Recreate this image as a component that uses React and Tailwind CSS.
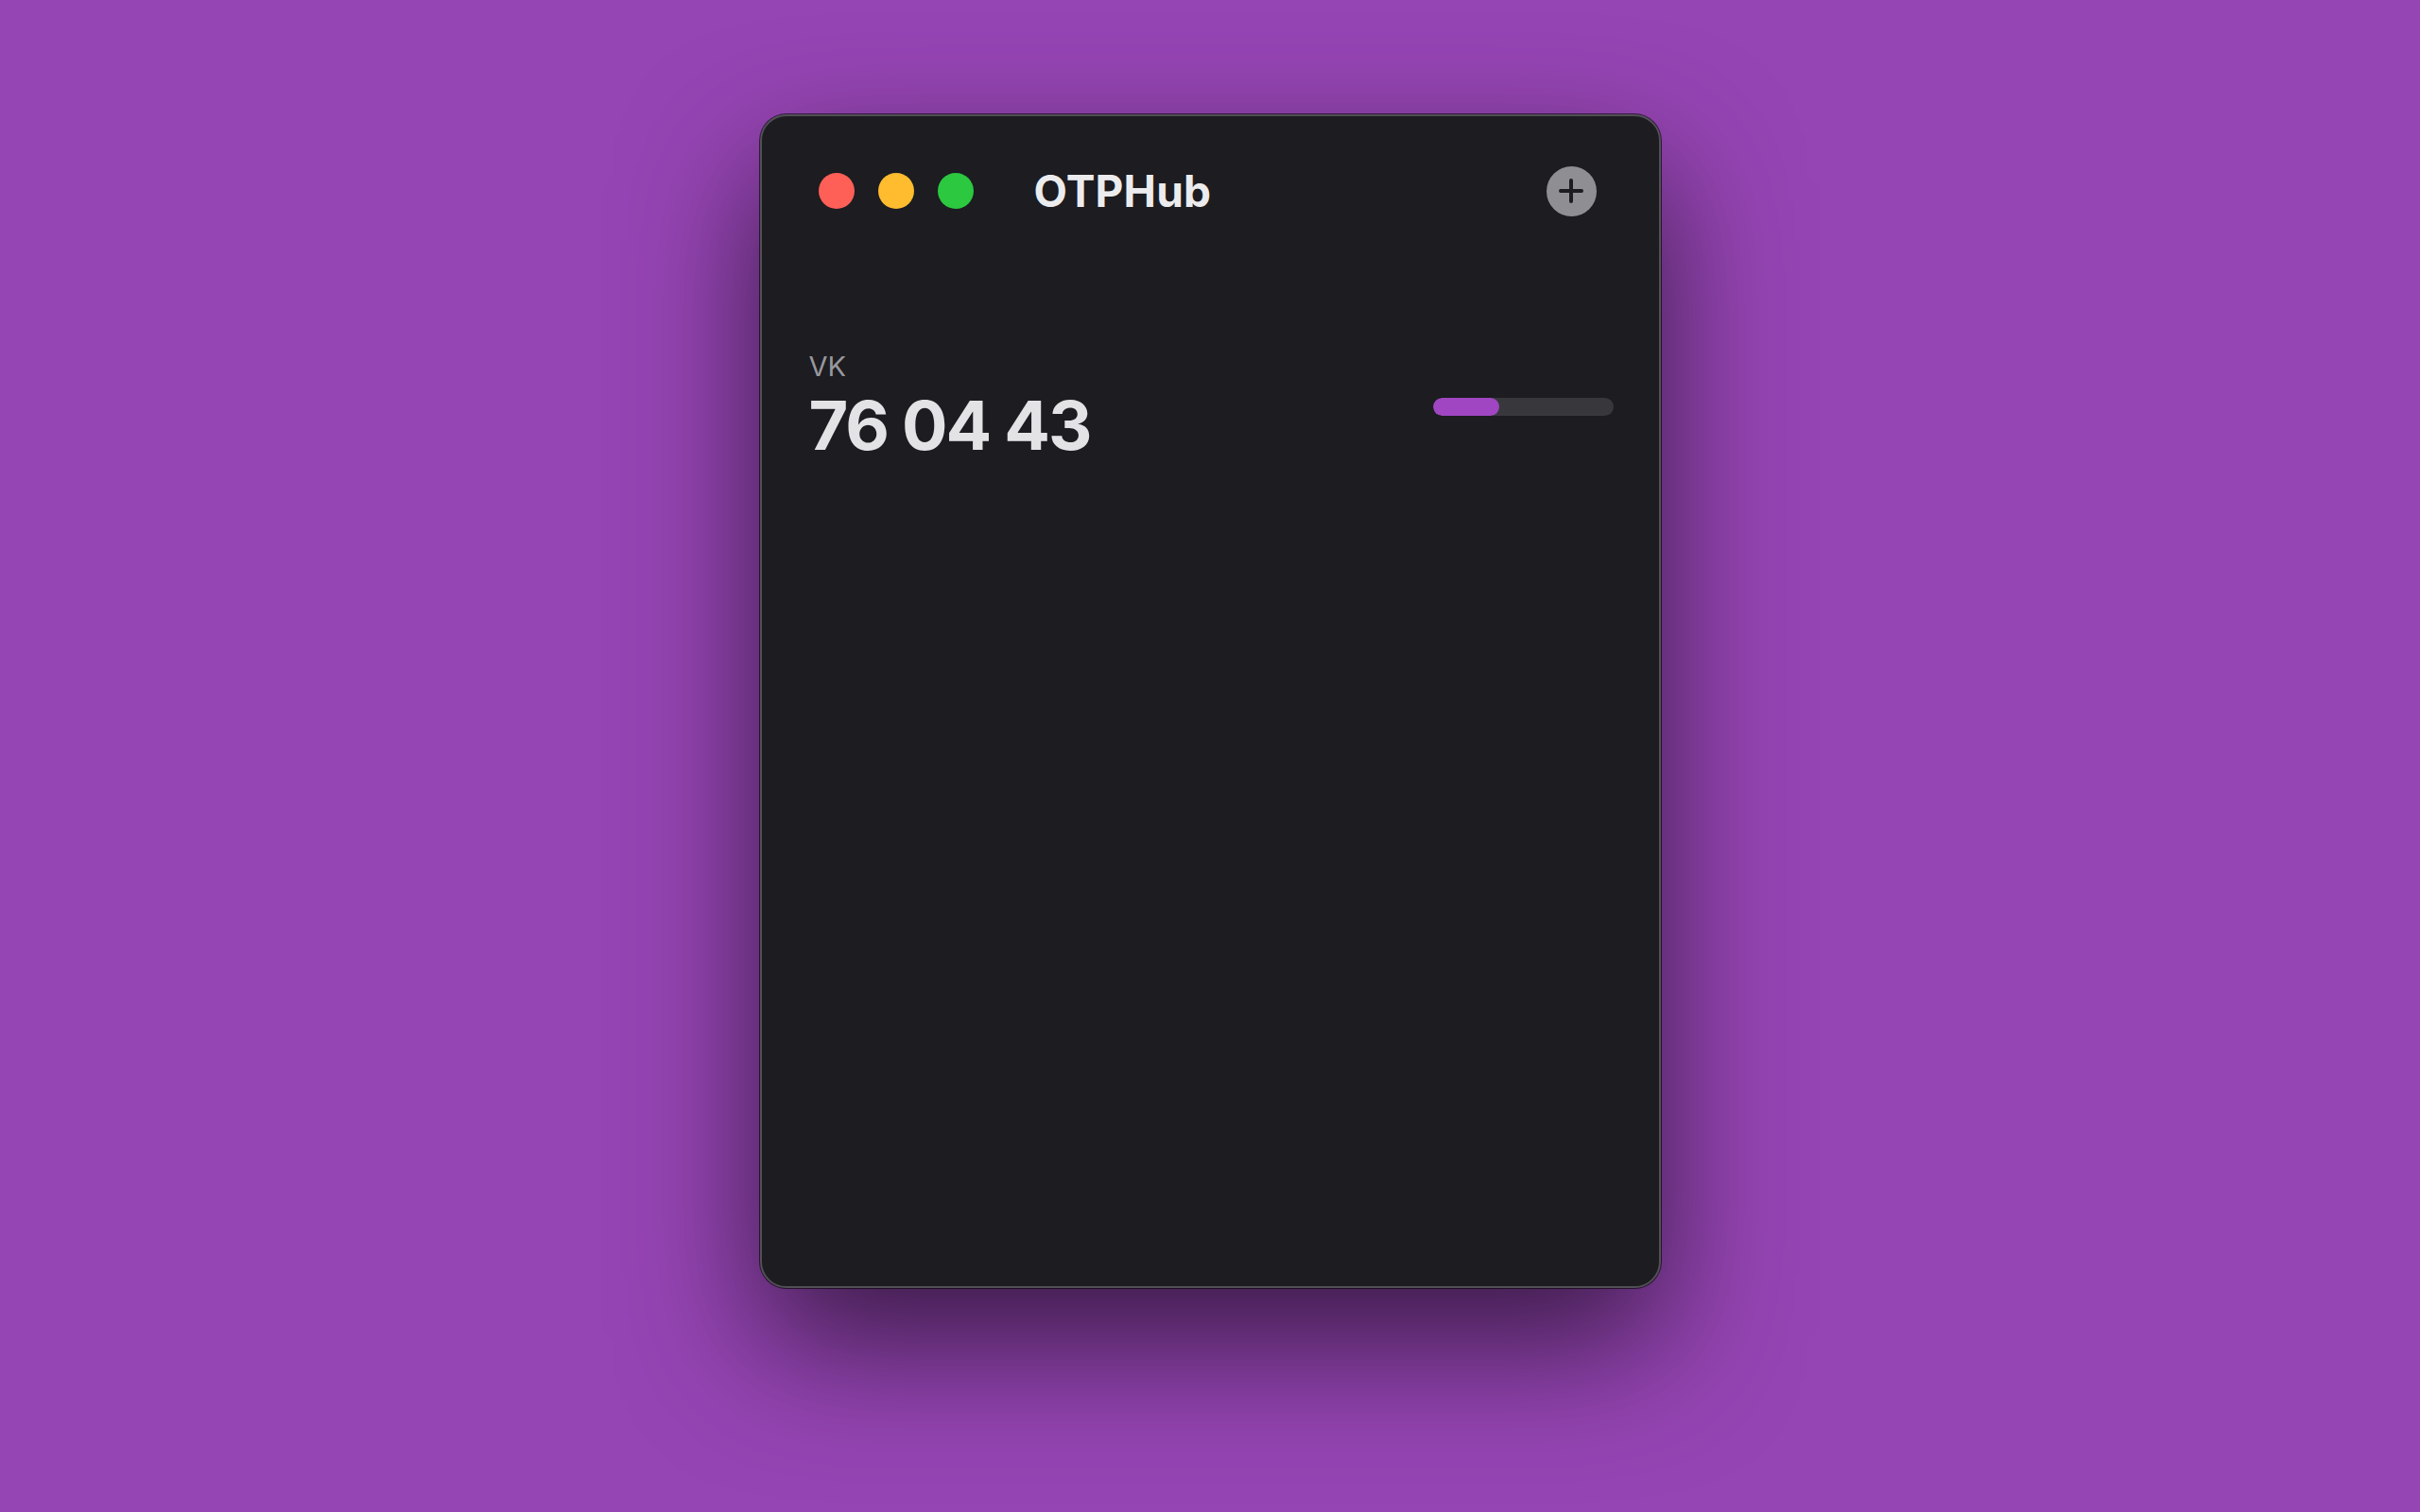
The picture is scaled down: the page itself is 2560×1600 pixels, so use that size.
export default function App() {
  return (
    <div
      className="w-full h-[1600px] bg-[#9645b4] flex justify-center pt-[121px] overflow-hidden"
      style={{ fontFamily: 'Inter, "Noto Sans", sans-serif' }}
    >
      <div className="w-[953px] h-[1242px] rounded-[28px] bg-[#1c1c21] border-2 border-[#505055] shadow-[0_0_0_1px_rgba(0,0,0,0.6),0_60px_140px_rgba(0,0,0,0.62)] flex flex-col">
        <div className="h-[158px] flex items-center pl-[60px] pr-[66px]">
          <div className="flex items-center gap-[25px]">
            <span className="w-[38px] h-[38px] rounded-full bg-[#fe5f57]" />
            <span className="w-[38px] h-[38px] rounded-full bg-[#febc2e]" />
            <span className="w-[38px] h-[38px] rounded-full bg-[#2bc840]" />
          </div>
          <div className="ml-[64px] text-[46px] font-bold leading-none text-[#ececee] tracking-[0.2px]">
            OTPHub
          </div>
          <div className="ml-auto w-[53px] h-[53px] rounded-full bg-[#8e8e93] flex items-center justify-center">
            <svg width="26" height="26" viewBox="0 0 26 26">
              <path d="M13 2v22M2 13h22" stroke="#1c1c21" strokeWidth="4" strokeLinecap="round" />
            </svg>
          </div>
        </div>
        <div className="pt-[89px] pl-[50px] pr-[48px] flex items-center justify-between">
          <div className="flex flex-col gap-[4px]">
            <div className="text-[29px] leading-[36px] text-[#98989d]">VK</div>
            <div className="text-[72px] leading-[80px] font-bold text-[#e3e3e6] tracking-[-2px]">
              76 04 43
            </div>
          </div>
          <div className="w-[191px] h-[19px] rounded-full bg-[#38383c] overflow-hidden">
            <div className="h-full rounded-full bg-[#a046c2]" style={{ width: '37%' }} />
          </div>
        </div>
      </div>
    </div>
  );
}
